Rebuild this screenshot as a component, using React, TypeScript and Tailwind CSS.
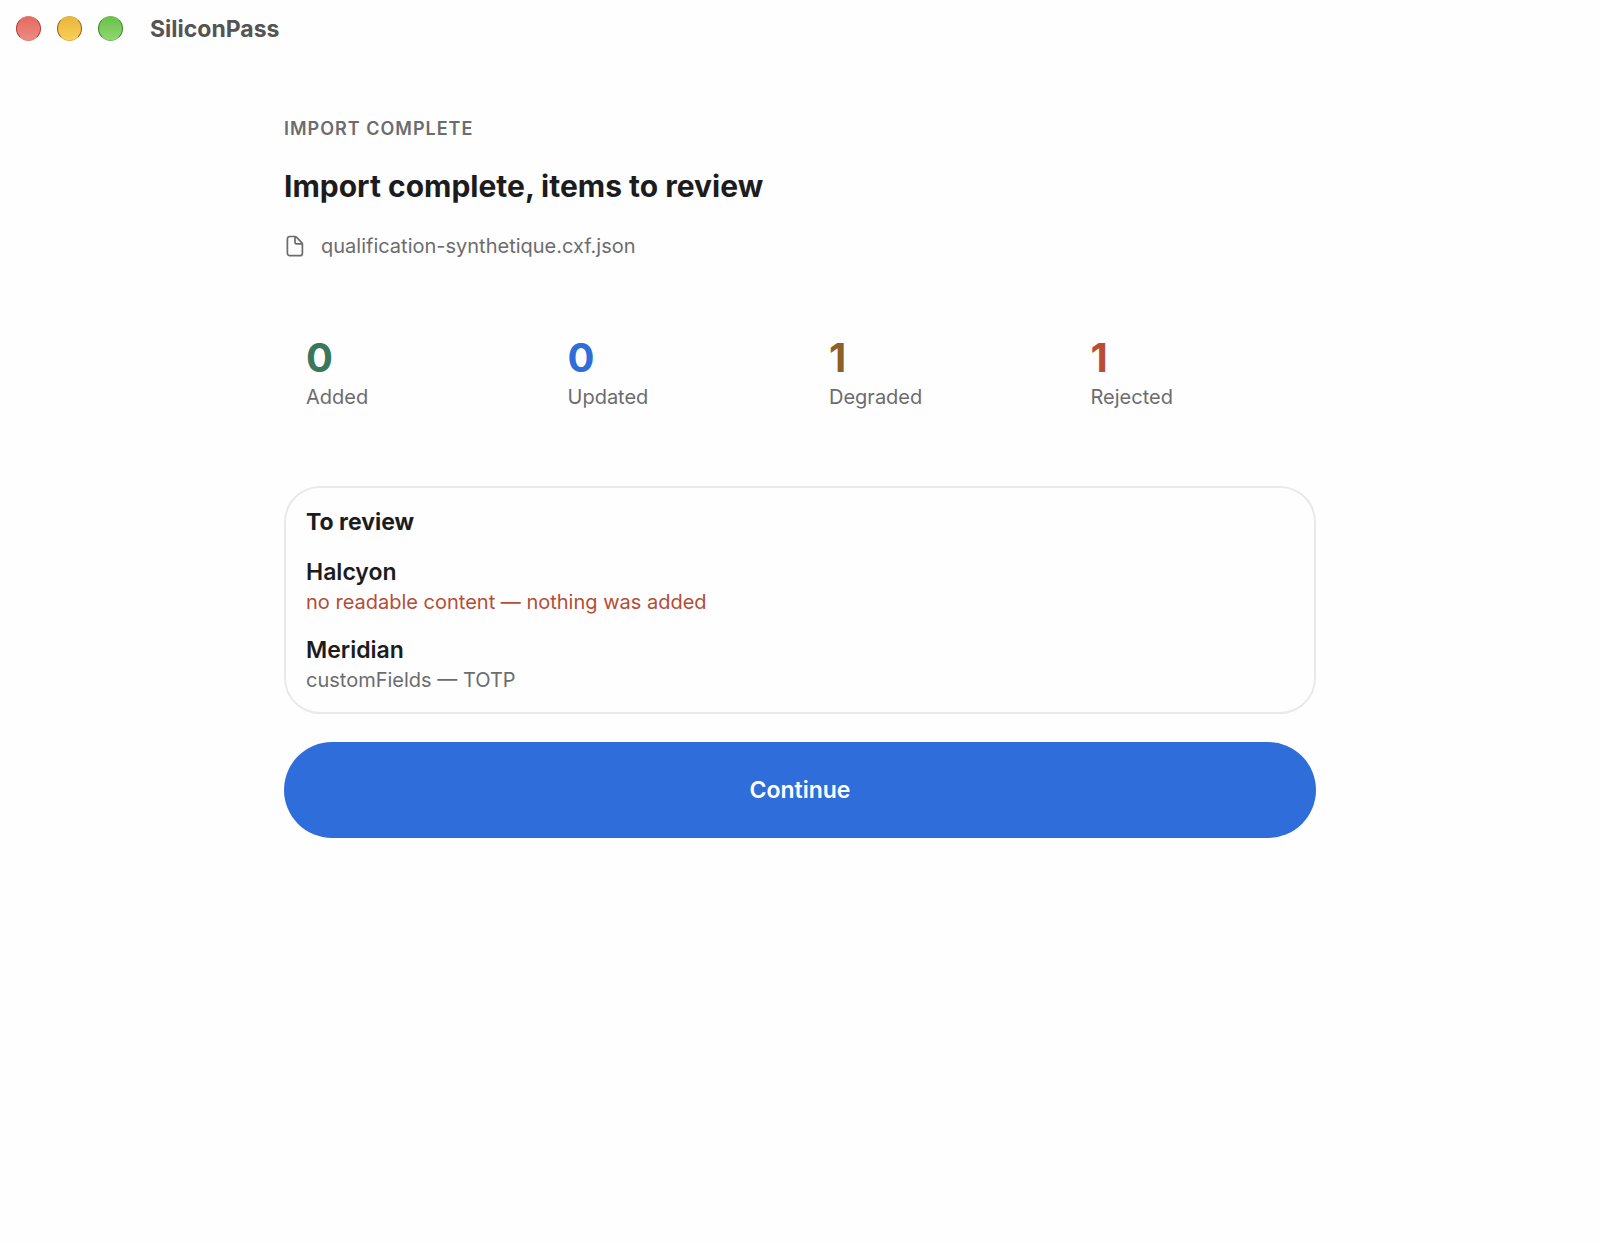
const windowControls = [
  { label: "Close", style: "border-x-[#b0372f] border-y-[#e07a70] bg-linear-to-b from-[#e5695f] to-[#ec8b82]" },
  { label: "Minimize", style: "border-x-[#8a5f1c] border-y-[#e3b13f] bg-linear-to-b from-[#eab53c] to-[#f8cf58]" },
  { label: "Zoom", style: "border-x-[#3c7d25] border-y-[#72bd52] bg-linear-to-b from-[#69c246] to-[#8fd672]" },
];

const stats = [
  { value: 0, label: "Added", color: "text-[#39785a]" },
  { value: 0, label: "Updated", color: "text-[#2f6ddb]" },
  { value: 1, label: "Degraded", color: "text-[#8e5f27]" },
  { value: 1, label: "Rejected", color: "text-[#bb4d34]" },
];

const reviewItems = [
  { name: "Halcyon", detail: "no readable content — nothing was added", color: "text-[#b44d35]" },
  { name: "Meridian", detail: "customFields — TOTP", color: "text-[#6c6c6e]" },
];

function FileIcon() {
  return (
    <svg
      className="h-[22px] w-[20px] shrink-0"
      viewBox="0 0 20 22"
      fill="none"
      stroke="currentColor"
      strokeWidth="1.7"
      strokeLinejoin="round"
      aria-hidden="true"
    >
      <path d="M11 1.5H5.8A2.4 2.4 0 0 0 3.4 3.9V18.3A2.4 2.4 0 0 0 5.8 20.7H16A2.4 2.4 0 0 0 18.4 18.3V9.1C18.4 8.5 18.2 8.1 17.8 7.7L12.4 2.1C12 1.7 11.6 1.5 11 1.5Z" />
      <path d="M11 1.6V7.6A1.3 1.3 0 0 0 12.3 8.9H18.2" />
    </svg>
  );
}

export default function App() {
  return (
    <div className="min-h-screen bg-[#fefefe] font-['Inter',sans-serif] text-[#1c1c1e]">
      <header className="flex h-[57px] items-center px-4">
        <div className="flex gap-4">
          {windowControls.map((control) => (
            <button
              key={control.label}
              type="button"
              aria-label={control.label}
              className={`size-[25px] rounded-full border ${control.style}`}
            />
          ))}
        </div>
        <span className="ml-[27px] text-[23px] leading-7 font-bold text-[#545454]">SiliconPass</span>
      </header>

      <main className="mx-auto w-full max-w-[1032px] pt-[60px]">
        <p className="text-[18px] leading-6 font-semibold tracking-[1px] text-[#6c6c6e] uppercase">
          Import complete
        </p>
        <h1 className="mt-[27px] text-[30px] leading-9 font-bold">Import complete, items to review</h1>
        <p className="mt-[30px] flex items-center gap-[17px] text-[20px] leading-6 text-[#6c6c6e]">
          <FileIcon />
          qualification-synthetique.cxf.json
        </p>

        <dl className="mt-[76px] grid grid-cols-4 gap-[14px]">
          {stats.map((stat) => (
            <div key={stat.label} className="flex flex-col-reverse gap-[3px] px-[22px]">
              <dt className="text-[20px] leading-6 text-[#6c6c6e]">{stat.label}</dt>
              <dd className={`text-[40px] leading-[48px] font-bold ${stat.color}`}>{stat.value}</dd>
            </div>
          ))}
        </dl>

        <section className="mt-[77px] flex flex-col gap-[22px] rounded-[36px] border-2 border-[#e9e9ea] px-5 py-5">
          <h2 className="text-[23px] leading-7 font-bold">To review</h2>
          {reviewItems.map((item) => (
            <div key={item.name} className="flex flex-col gap-1">
              <h3 className="text-[23px] leading-7 font-semibold">{item.name}</h3>
              <p className={`text-[20px] leading-6 ${item.color}`}>{item.detail}</p>
            </div>
          ))}
        </section>

        <button
          type="button"
          className="mt-7 h-24 w-full rounded-full bg-[#2f6ddb] text-[23px] leading-7 font-semibold text-white"
        >
          Continue
        </button>
      </main>
    </div>
  );
}
